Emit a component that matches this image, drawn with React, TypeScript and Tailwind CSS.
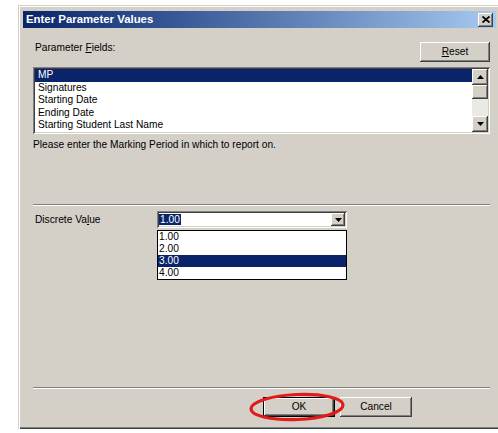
import React from "react";

const raised =
  "shadow-[inset_-1px_-1px_#404040,inset_1px_1px_#ffffff,inset_-2px_-2px_#808080,inset_2px_2px_#d4d0c8]";
const sunken =
  "shadow-[inset_1px_1px_#808080,inset_-1px_-1px_#ffffff,inset_2px_2px_#404040,inset_-2px_-2px_#d4d0c8]";

function Arrow({ dir }: { dir: "up" | "down" }) {
  return (
    <svg width="7" height="4" viewBox="0 0 7 4">
      {dir === "up" ? (
        <polygon points="3.5,0 7,4 0,4" fill="#000" />
      ) : (
        <polygon points="0,0 7,0 3.5,4" fill="#000" />
      )}
    </svg>
  );
}

function WinButton({
  children,
  className = "",
  isDefault = false,
}: {
  children: React.ReactNode;
  className?: string;
  isDefault?: boolean;
}) {
  return (
    <div
      className={`flex items-center justify-center bg-[#d4d0c8] ${
        isDefault ? "border border-black" : ""
      } ${className}`}
    >
      <div
        className={`flex h-full w-full items-center justify-center ${raised}`}
      >
        {children}
      </div>
    </div>
  );
}

const fields = [
  "MP",
  "Signatures",
  "Starting Date",
  "Ending Date",
  "Starting Student Last Name",
  "Ending Student Last Name",
];

const values = ["1.00", "2.00", "3.00", "4.00"];

export default function App() {
  return (
    <div
      className="min-h-[433px] w-[498px] overflow-hidden bg-white pl-[18px] pt-[5px] text-[10.2px] leading-[12px] text-black"
      style={{ fontFamily: '"Liberation Sans", Arial, sans-serif' }}
    >
      {/* window frame runs past the right edge of the page */}
      <div className="flex h-[424px] w-[486px] flex-col bg-[#d4d0c8] pl-[5px] pr-[8px] pt-[6px] shadow-[inset_1px_1px_#d4d0c8,inset_2px_2px_#ffffff,inset_-1px_-1px_#404040,inset_-2px_-2px_#808080]">
        {/* title bar */}
        <div className="flex h-[17px] shrink-0 items-center justify-between bg-linear-to-r from-[#0a246a] to-[#a6caf0] pl-[3px] pr-[3px]">
          <span className="text-[11.4px] font-bold leading-[17px] text-white">
            Enter Parameter Values
          </span>
          <div
            className={`flex h-[14px] w-[15px] items-center justify-center bg-[#d4d0c8] ${raised}`}
          >
            <svg width="8" height="7" viewBox="0 0 8 7">
              <path
                d="M0.5 0.5 L7.5 6.5 M7.5 0.5 L0.5 6.5"
                stroke="#000"
                strokeWidth="1.8"
              />
            </svg>
          </div>
        </div>

        {/* body */}
        <div className="flex flex-1 flex-col pl-[10px] pr-[6px]">
          <div className="mt-[14px] flex items-start justify-between">
            <span className="pl-[2px]">
              Parameter <span className="underline">F</span>ields:
            </span>
            <WinButton className="h-[20px] w-[70px]">
              <span>
                <span className="underline">R</span>eset
              </span>
            </WinButton>
          </div>

          {/* parameter list */}
          <div
            className={`mt-[5px] flex h-[67px] bg-white p-[2px] ${sunken}`}
          >
            <div className="flex-1 overflow-hidden">
              {fields.map((f, i) => (
                <div
                  key={f}
                  className={`flex h-[12.5px] items-center pl-[3px] ${
                    i === 0 ? "bg-[#0a246a] text-white" : ""
                  }`}
                >
                  {f}
                </div>
              ))}
            </div>
            <div className="flex w-[16px] flex-col bg-[#ebe9e4]">
              <div
                className={`flex h-[16px] items-center justify-center bg-[#d4d0c8] ${raised}`}
              >
                <Arrow dir="up" />
              </div>
              <div className={`h-[14px] bg-[#d4d0c8] ${raised}`} />
              <div className="flex-1" />
              <div
                className={`flex h-[16px] items-center justify-center bg-[#d4d0c8] ${raised}`}
              >
                <Arrow dir="down" />
              </div>
            </div>
          </div>

          <div className="mt-[5px]">
            Please enter the Marking Period in which to report on.
          </div>

          <div className="mt-[53px] h-[2px] border-t border-b border-t-[#808080] border-b-white" />

          {/* discrete value */}
          <div className="mt-[5px] flex items-center">
            <span className="w-[124px] pl-[2px]">
              Discrete Va<span className="underline">l</span>ue
            </span>
            <div className="relative">
              <div
                className={`flex h-[17px] w-[190px] items-center bg-white p-[2px] ${sunken}`}
              >
                <div className="flex-1">
                  <span className="bg-[#0a246a] px-[1px] text-white">1.00</span>
                </div>
                <div
                  className={`flex h-[13px] w-[14px] items-center justify-center bg-[#d4d0c8] ${raised}`}
                >
                  <Arrow dir="down" />
                </div>
              </div>
              <div className="absolute left-0 top-[19px] w-[190px] border border-black bg-white">
                {values.map((v, i) => (
                  <div
                    key={v}
                    className={`flex h-[12px] items-center pl-[1px] ${
                      i === 2 ? "bg-[#0a246a] text-white" : ""
                    }`}
                  >
                    {v}
                  </div>
                ))}
              </div>
            </div>
          </div>

          <div className="mt-[159px] h-[2px] border-t border-b border-t-[#808080] border-b-white" />

          {/* dialog buttons */}
          <div className="ml-[230px] mt-[8px] flex gap-[5px]">
            <div className="relative">
              <WinButton isDefault className="h-[20px] w-[72px]">
                <span>OK</span>
              </WinButton>
              <svg
                className="pointer-events-none absolute left-[-15px] top-[-5px]"
                width="98"
                height="30"
                viewBox="0 0 98 30"
              >
                <ellipse
                  cx="49"
                  cy="15"
                  rx="46"
                  ry="12.5"
                  fill="none"
                  stroke="#e01b1b"
                  strokeWidth="3.2"
                  transform="rotate(-2.5 49 15)"
                />
              </svg>
            </div>
            <WinButton className="h-[20px] w-[72px]">
              <span>Cancel</span>
            </WinButton>
          </div>
        </div>
      </div>
    </div>
  );
}
